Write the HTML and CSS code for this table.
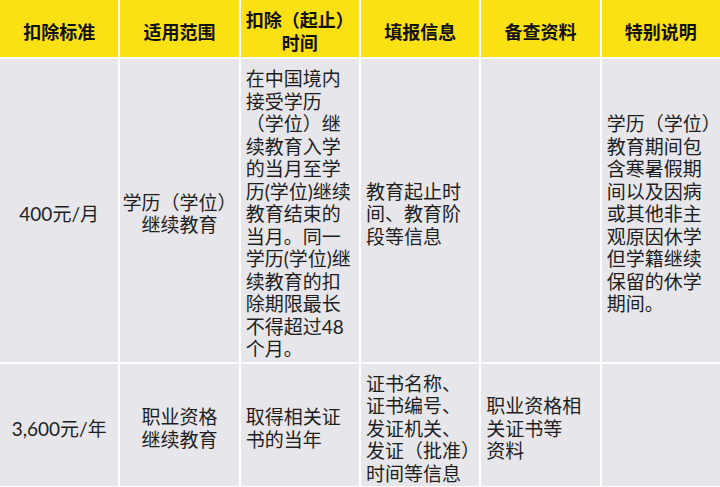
FILE: index.html
```html
<!DOCTYPE html>
<html lang="zh-CN">
<head>
<meta charset="utf-8">
<title>继续教育扣除</title>
<link rel="stylesheet" href="styles.css">
</head>
<body>
<div class="sheet">
  <div class="cell head">扣除标准</div>
  <div class="cell head">适用范围</div>
  <div class="cell head"><span class="ln">扣除（起止）</span><span class="ln">时间</span></div>
  <div class="cell head">填报信息</div>
  <div class="cell head">备查资料</div>
  <div class="cell head">特别说明</div>

  <div class="cell center">400元/月</div>
  <div class="cell center">学历（学位）<br>继续教育</div>
  <div class="cell left">在中国境内<br>接受学历<br>（学位）继<br>续教育入学<br>的当月至学<br>历(学位)继续<br>教育结束的<br>当月。同一<br>学历(学位)继<br>续教育的扣<br>除期限最长<br>不得超过48<br>个月。</div>
  <div class="cell left">教育起止时<br>间、教育阶<br>段等信息</div>
  <div class="cell left"></div>
  <div class="cell left">学历（学位）<br>教育期间包<br>含寒暑假期<br>间以及因病<br>或其他非主<br>观原因休学<br>但学籍继续<br>保留的休学<br>期间。</div>

  <div class="cell center">3,600元/年</div>
  <div class="cell center">职业资格<br>继续教育</div>
  <div class="cell left">取得相关证<br>书的当年</div>
  <div class="cell left">证书名称、<br>证书编号、<br>发证机关、<br>发证（批准）<br>时间等信息</div>
  <div class="cell left">职业资格相<br>关证书等<br>资料</div>
  <div class="cell left"></div>
</div>
</body>
</html>
```

FILE: styles.css
```css
html, body {
  margin: 0;
  padding: 0;
  background: #ffffff;
}

body {
  width: 720px;
  height: 487px;
  overflow: hidden;
  font-family: Lato, "Noto Sans CJK SC", sans-serif;
  color: #1e1e1e;
}

.sheet {
  display: grid;
  grid-template-columns: repeat(6, minmax(0, 1fr));
  gap: 2px;
  width: 720px;
}

.cell {
  display: flex;
  flex-direction: column;
  justify-content: center;
  min-width: 0;
  background: #e7e6ea;
  font-size: 19px;
  line-height: 22.5px;
  white-space: nowrap;
  padding: 9px 0 1px 5px;
}

.head {
  background: #fbe014;
  font-family: "Noto Sans CJK SC", sans-serif;
  font-weight: 700;
  font-size: 18px;
  line-height: 23px;
  color: #111111;
  text-align: center;
  padding: 8px 1px 3px;
}

.head .ln {
  display: block;
  height: 23px;
  overflow: visible;
}

.center {
  text-align: center;
  padding-left: 1px;
  padding-right: 1px;
}

.left {
  text-align: left;
}
```
